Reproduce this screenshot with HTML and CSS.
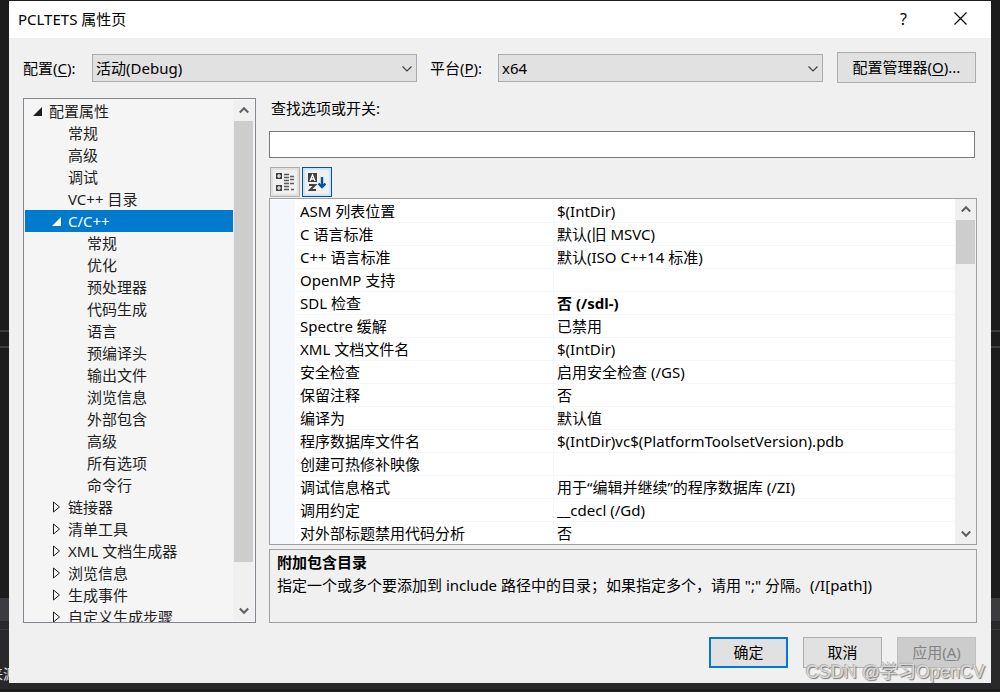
FILE: index.html
```html
<!DOCTYPE html>
<html lang="zh-CN">
<head>
<meta charset="utf-8">
<title>PCLTETS 属性页</title>
<link rel="stylesheet" href="styles.css">
</head>
<body>
<svg class="defs" width="0" height="0" aria-hidden="true">
  <symbol id="open" viewBox="0 0 9 9"><path d="M9 0v9H0z" fill="currentColor"/></symbol>
  <symbol id="closed" viewBox="0 0 9 12"><path d="M1.5 1v10L7.500 6z" fill="none" stroke="currentColor"/></symbol>
  <symbol id="up" viewBox="0 0 10 8"><path d="M.8 6.500 5 2.200l4.200 4.300" fill="none" stroke="#606060" stroke-width="2"/></symbol>
  <symbol id="down" viewBox="0 0 10 8"><path d="M.8 1.500 5 5.800l4.200-4.300" fill="none" stroke="#606060" stroke-width="2"/></symbol>
  <symbol id="chevron" viewBox="0 0 10 6"><path d="M.5.500 5 5 9.500.500" fill="none" stroke="#404040" stroke-width="1.200"/></symbol>
</svg>
<span class="behind">来源</span>
<main class="dialog">
  <header class="titlebar">
    <h1>PCLTETS 属性页</h1>
    <button class="caption" aria-label="帮助">?</button>
    <button class="caption" aria-label="关闭"><svg width="13" height="13" viewBox="0 0 13 13"><path d="M.5.500l12 12M12.500.500l-12 12" stroke="#000" stroke-width="1.200" fill="none"/></svg></button>
  </header>
  <div class="config">
    <label for="cfg">配置(<u>C</u>):</label>
    <div class="combo"><select id="cfg"><option>活动(Debug)</option></select><svg width="10" height="6"><use href="#chevron"/></svg></div>
    <label class="platform" for="plat">平台(<u>P</u>):</label>
    <div class="combo"><select id="plat"><option>x64</option></select><svg width="10" height="6"><use href="#chevron"/></svg></div>
    <button class="btn manager">配置管理器(<u>O</u>)...</button>
  </div>
  <div class="content">
    <nav class="tree">
      <ul>
        <li class="root"><svg width="9" height="9"><use href="#open"/></svg>配置属性</li>
        <li class="sub">常规</li>
        <li class="sub">高级</li>
        <li class="sub">调试</li>
        <li class="sub">VC++ 目录</li>
        <li class="sub selected"><svg width="9" height="9"><use href="#open"/></svg>C/C++</li>
        <li class="leaf">常规</li>
        <li class="leaf">优化</li>
        <li class="leaf">预处理器</li>
        <li class="leaf">代码生成</li>
        <li class="leaf">语言</li>
        <li class="leaf">预编译头</li>
        <li class="leaf">输出文件</li>
        <li class="leaf">浏览信息</li>
        <li class="leaf">外部包含</li>
        <li class="leaf">高级</li>
        <li class="leaf">所有选项</li>
        <li class="leaf">命令行</li>
        <li class="sub"><svg width="9" height="12"><use href="#closed"/></svg>链接器</li>
        <li class="sub"><svg width="9" height="12"><use href="#closed"/></svg>清单工具</li>
        <li class="sub"><svg width="9" height="12"><use href="#closed"/></svg>XML 文档生成器</li>
        <li class="sub"><svg width="9" height="12"><use href="#closed"/></svg>浏览信息</li>
        <li class="sub"><svg width="9" height="12"><use href="#closed"/></svg>生成事件</li>
        <li class="sub"><svg width="9" height="12"><use href="#closed"/></svg>自定义生成步骤</li>
      </ul>
      <div class="scroll"><svg width="10" height="8"><use href="#up"/></svg><div class="track"><div class="thumb tree-thumb"></div></div><svg width="10" height="8"><use href="#down"/></svg></div>
    </nav>
    <section class="pane">
      <label class="search-label" for="search">查找选项或开关:</label>
      <input class="search" id="search" type="text">
      <div class="tools">
        <button class="tool" aria-label="按类别排序">
          <svg width="18" height="18" viewBox="0 0 18 18"><path d="M0 0h6v6H0zM0 12h6v6H0z" fill="#424242"/><path d="M3 1v4M1 3h4M3 13v4M1 15h4" stroke="#fff" stroke-width="1.200"/><path d="M8 1h5M8 4h5M8 7h5M8 10h5M8 13h5M8 16h5M14 3h4M14 6h4M14 10h4M15 16h3" stroke="#5a5a5a" stroke-width="1.500" transform="translate(0 .5)"/></svg>
        </button>
        <button class="tool active" aria-label="按字母排序">
          <svg width="18" height="18" viewBox="0 0 18 18"><path d="M0 0h9v9H0z" fill="#424242"/><path d="M2 8l2.500-6L7 8M3 6h3" fill="none" stroke="#fff" stroke-width="1.300"/><path d="M1 12h6l-5 5h6" fill="none" stroke="#424242" stroke-width="2"/><path d="M14 4v10M10.500 10.500 14 14l3.500-3.500" fill="none" stroke="#00539c" stroke-width="2.400"/></svg>
        </button>
      </div>
      <div class="grid">
        <div class="rows">
        <table>
          <colgroup><col class="gutter"><col class="name"><col></colgroup>
          <tbody>
          <tr><td></td><th>ASM 列表位置</th><td>$(IntDir)</td></tr>
          <tr><td></td><th>C 语言标准</th><td>默认(旧 MSVC)</td></tr>
          <tr><td></td><th>C++ 语言标准</th><td>默认(ISO C++14 标准)</td></tr>
          <tr><td></td><th>OpenMP 支持</th><td></td></tr>
          <tr><td></td><th>SDL 检查</th><td><b>否 (/sdl-)</b></td></tr>
          <tr><td></td><th>Spectre 缓解</th><td>已禁用</td></tr>
          <tr><td></td><th>XML 文档文件名</th><td>$(IntDir)</td></tr>
          <tr><td></td><th>安全检查</th><td>启用安全检查 (/GS)</td></tr>
          <tr><td></td><th>保留注释</th><td>否</td></tr>
          <tr><td></td><th>编译为</th><td>默认值</td></tr>
          <tr><td></td><th>程序数据库文件名</th><td>$(IntDir)vc$(PlatformToolsetVersion).pdb</td></tr>
          <tr><td></td><th>创建可热修补映像</th><td></td></tr>
          <tr><td></td><th>调试信息格式</th><td>用于“编辑并继续”的程序数据库 (/ZI)</td></tr>
          <tr><td></td><th>调用约定</th><td>__cdecl (/Gd)</td></tr>
          <tr><td></td><th>对外部标题禁用代码分析</th><td>否</td></tr>
          </tbody>
        </table>
        </div>
        <div class="scroll"><svg width="10" height="8"><use href="#up"/></svg><div class="track"><div class="thumb grid-thumb"></div></div><svg width="10" height="8"><use href="#down"/></svg></div>
      </div>
      <div class="description">
        <h2>附加包含目录</h2>
        <p>指定一个或多个要添加到 include 路径中的目录；如果指定多个，请用 ";" 分隔。(/I[path])</p>
      </div>
    </section>
  </div>
  <footer class="actions">
    <button class="btn primary">确定</button>
    <button class="btn">取消</button>
    <button class="btn" disabled>应用(<u>A</u>)</button>
  </footer>
</main>
<span class="watermark">CSDN @学习OpenCV</span>
</body>
</html>
```
FILE: styles.css
```css
* { box-sizing: border-box; }
body {
  margin: 0;
  height: 100vh;
  padding: 1px 9px 9px;
  display: flex;
  position: relative;
  overflow: hidden;
  font: 15px/22px "Noto Sans", "Noto Sans CJK SC", sans-serif;
  color: #000;
  background: linear-gradient(#1c1c1d 330px, #3c3c3e 330px 332px, #1c1c1d 332px 346px, #3c3c3e 346px 348px, #1c1c1d 348px 598px, #3c3c40 598px 621px, #29292b 621px 629px, #3c3c3e 629px 630px, #29292b 630px 689px, #1e1e1f 689px);
}
button, input, select { font: inherit; color: inherit; }
button { padding: 0; }
h1, h2, p, ul { margin: 0; padding: 0; }
h1, h2 { font-size: 15px; }
u { text-underline-offset: 2px; }
.defs { position: absolute; }
.behind { position: absolute; left: -11px; top: 663px; color: #ddd; font-size: 14px; }
.dialog {
  position: relative;
  flex: 1;
  min-width: 0;
  display: flex;
  flex-direction: column;
  background: #f0f0f0;
}
.titlebar { display: flex; align-items: center; height: 37px; padding: 0 2px 2px 9px; background: #fff; }
.titlebar h1 { flex: 1; font-weight: 400; }
.caption { width: 57px; height: 35px; border: 0; background: none; display: grid; place-items: center; font-size: 16px; }

.config { display: flex; align-items: center; height: 60px; padding: 0 15px 0 14px; }
.config label { width: 69px; white-space: nowrap; }
.config .platform { margin-left: 13px; width: 68px; }
.combo { position: relative; flex: 1; height: 28px; }
.combo select { width: 100%; height: 100%; appearance: none; border: 1px solid #acacac; border-radius: 0; background: #e1e1e1; padding: 0 24px 0 3px; }
.combo svg { position: absolute; right: 5px; top: 12px; pointer-events: none; }
.btn { width: 79px; height: 31px; padding-bottom: 2px; border: 1px solid #adadad; background: #e1e1e1; }
.manager { width: 139px; margin: 0 0 1px 14px; }
.primary { border: 2px solid #0078d7; }
.btn:disabled { background: #ccc; border-color: #bfbfbf; color: #838383; }

.content { flex: 1; min-height: 0; display: flex; gap: 13px; padding: 0 14px; }
.tree { width: 233px; display: flex; border: 1px solid #828790; padding: 1px; background: #f5f5f5; color: #1e1e1e; overflow: hidden; }
.tree ul { flex: 1; list-style: none; }
.tree li { display: flex; align-items: center; height: 22px; white-space: nowrap; }
.tree .root { padding-left: 8px; gap: 7px; }
.tree .sub { padding-left: 43px; }
.tree .sub svg { margin: 0 7px 0 -16px; }
.tree .leaf { padding-left: 62px; }
.tree .selected { background: #007acc; color: #fff; }
.scroll { width: 21px; flex: none; display: flex; flex-direction: column; align-items: center; padding: 6px 1px; gap: 7px; background: #f0f0f0; }
.track { flex: 1; width: 100%; }
.thumb { background: #cdcdcd; }
.tree-thumb { height: 92%; }
.grid-thumb { height: 44px; }

.pane { flex: 1; min-width: 0; display: flex; flex-direction: column; }
.search-label { margin-left: 2px; line-height: 20px; }
.search { height: 27px; margin: 13px 2px 9px 0; border: 1px solid #7a7a7a; background: #fff; padding: 0 4px; }
.tools { display: flex; gap: 2px; padding-left: 1px; margin-bottom: 1px; }
.tool { width: 30px; height: 30px; border: 1px solid #adadad; background: #f0f0f0; box-shadow: inset 0 0 0 2px #e1e1e1; display: grid; place-items: center; }
.tool.active { border-color: #00539c; box-shadow: inset 0 0 0 2px #cce4f7; }
.grid { flex: 1; min-height: 0; display: flex; border: 1px solid #a0a0a0; background: #fff; overflow: hidden; }
.rows { flex: 1; min-width: 0; }
table { width: 100%; table-layout: fixed; border-collapse: separate; border-spacing: 0; margin-top: 1px; }
.gutter { width: 25px; }
.name { width: 259px; }
td, th { height: 23px; padding: 0 3px; border-bottom: 1px solid #f4f7fc; font-weight: 400; text-align: left; white-space: nowrap; }
td:first-child { background: #f4f7fc; }
th { padding-left: 5px; border-right: 1px solid #f4f7fc; }
.description { height: 74px; margin-top: 4px; padding: 1px 7px; border: 1px solid #a0a0a0; line-height: 23px; white-space: nowrap; }

.actions { display: flex; justify-content: flex-end; gap: 15px; padding: 14px 15px 15px; }
.watermark {
  position: absolute;
  right: 15px;
  bottom: 8px;
  font: 18px/24px "Liberation Sans", "Noto Sans CJK SC", sans-serif;
  color: #d8d8d8;
  text-shadow: 1px 1px 1px #777, -1px -1px 0 #b4b4b4;
}
```
